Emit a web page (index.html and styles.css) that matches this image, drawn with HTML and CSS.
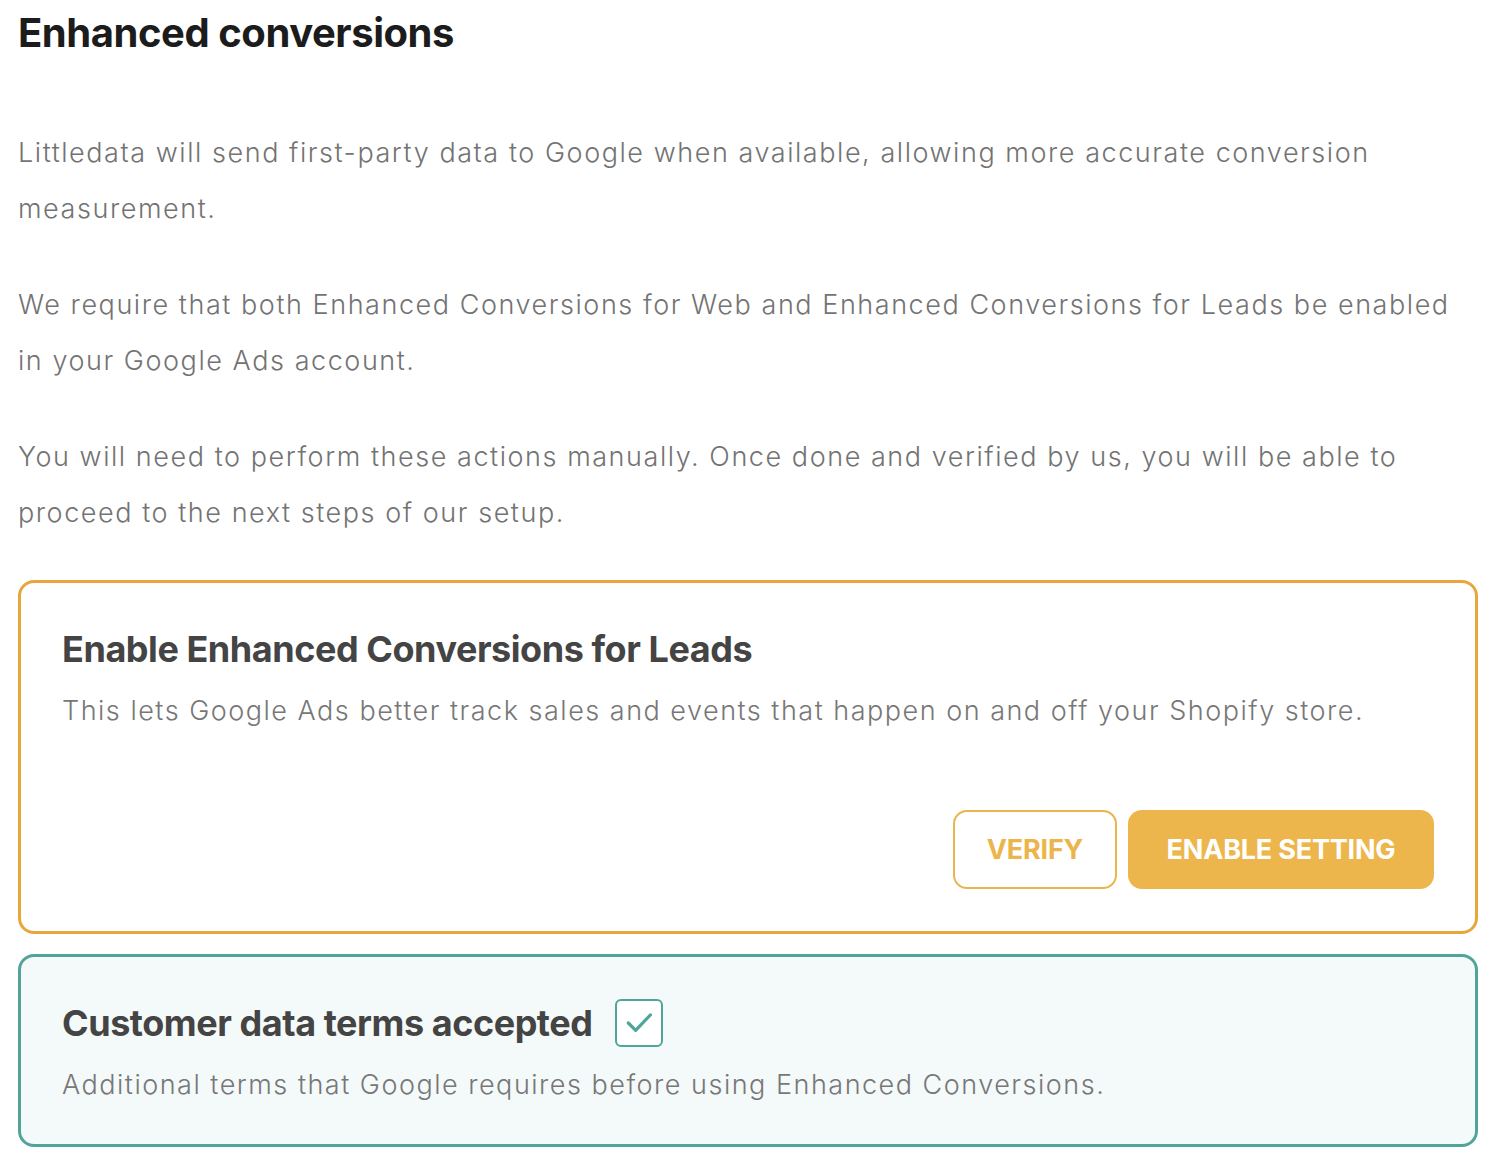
FILE: index.html
```html
<!DOCTYPE html>
<html lang="en">
<head>
  <meta charset="UTF-8">
  <meta name="viewport" content="width=device-width, initial-scale=1.0">
  <title>Enhanced conversions</title>
  <link rel="stylesheet" href="styles.css">
</head>
<body>
  <div class="page">
    <h1 class="title">Enhanced conversions</h1>

    <p class="text">Littledata will send first-party data to Google when available, allowing more accurate conversion measurement.</p>
    <p class="text">We require that both Enhanced Conversions for Web and Enhanced Conversions for Leads be enabled in your Google Ads account.</p>
    <p class="text">You will need to perform these actions manually. Once done and verified by us, you will be able to proceed to the next steps of our setup.</p>

    <div class="card card-pending">
      <h2 class="card-title">Enable Enhanced Conversions for Leads</h2>
      <p class="card-text">This lets Google Ads better track sales and events that happen on and off your Shopify store.</p>
      <div class="actions">
        <button class="btn btn-outline">VERIFY</button>
        <button class="btn btn-fill">ENABLE SETTING</button>
      </div>
    </div>

    <div class="card card-done">
      <h2 class="card-title">
        Customer data terms accepted
        <span class="check">
          <svg width="32" height="32" viewBox="0 0 24 24" fill="none" stroke="currentColor" stroke-width="2.4" stroke-linecap="round" stroke-linejoin="round"><path d="M4 12l5.5 5.5L20.5 6"/></svg>
        </span>
      </h2>
      <p class="card-text">Additional terms that Google requires before using Enhanced Conversions.</p>
    </div>
  </div>
</body>
</html>
```

FILE: styles.css
```css
body{
  margin: 0;
  background: #ffffff;
  font-family: Inter, "Noto Sans", sans-serif;
}
.page{
  width: 1460px;
  padding: 0 18px;
}
.title{
  margin: 7px 0 66px 0;
  font-size: 40px;
  line-height: 52px;
  font-weight: 700;
  color: #1c1c1c;
  letter-spacing: -0.45px;
}
.text{
  margin: 0 0 40px 0;
  font-size: 27px;
  line-height: 56px;
  font-weight: 300;
  color: #737373;
  letter-spacing: 1.55px;
}
.card{
  border-radius: 16px;
  padding: 42px 41px;
}
.card-pending{
  border: 3px solid #e8a63c;
  margin-top: -1px;
}
.card-done{
  border: 3px solid #50a49a;
  background: #f4f9f9;
  margin-top: 20px;
  padding-bottom: 31px;
}
.card-title{
  margin: 0;
  display: flex;
  align-items: center;
  font-size: 36px;
  line-height: 48px;
  font-weight: 700;
  color: #444444;
  letter-spacing: -0.45px;
}
.card-text{
  margin: 10px 0 0 0;
  font-size: 27px;
  line-height: 56px;
  font-weight: 300;
  color: #777777;
  letter-spacing: 1.5px;
}
.actions{
  display: flex;
  justify-content: flex-end;
  gap: 11px;
  margin-top: 71px;
}
.btn{
  height: 79px;
  border-radius: 14px;
  font-family: Inter, "Noto Sans", sans-serif;
  font-size: 27px;
  font-weight: 700;
  letter-spacing: -0.2px;
  cursor: pointer;
}
.btn-outline{
  width: 164px;
  background: #ffffff;
  border: 2px solid #ecb54b;
  color: #ecb54b;
}
.btn-fill{
  width: 306px;
  background: #edb64c;
  border: none;
  color: #ffffff;
}
.check{
  display: inline-flex;
  align-items: center;
  justify-content: center;
  width: 44px;
  height: 44px;
  margin-left: 22px;
  border: 2px solid #50a49a;
  border-radius: 6px;
  background: #ffffff;
  color: #50a49a;
}
```
